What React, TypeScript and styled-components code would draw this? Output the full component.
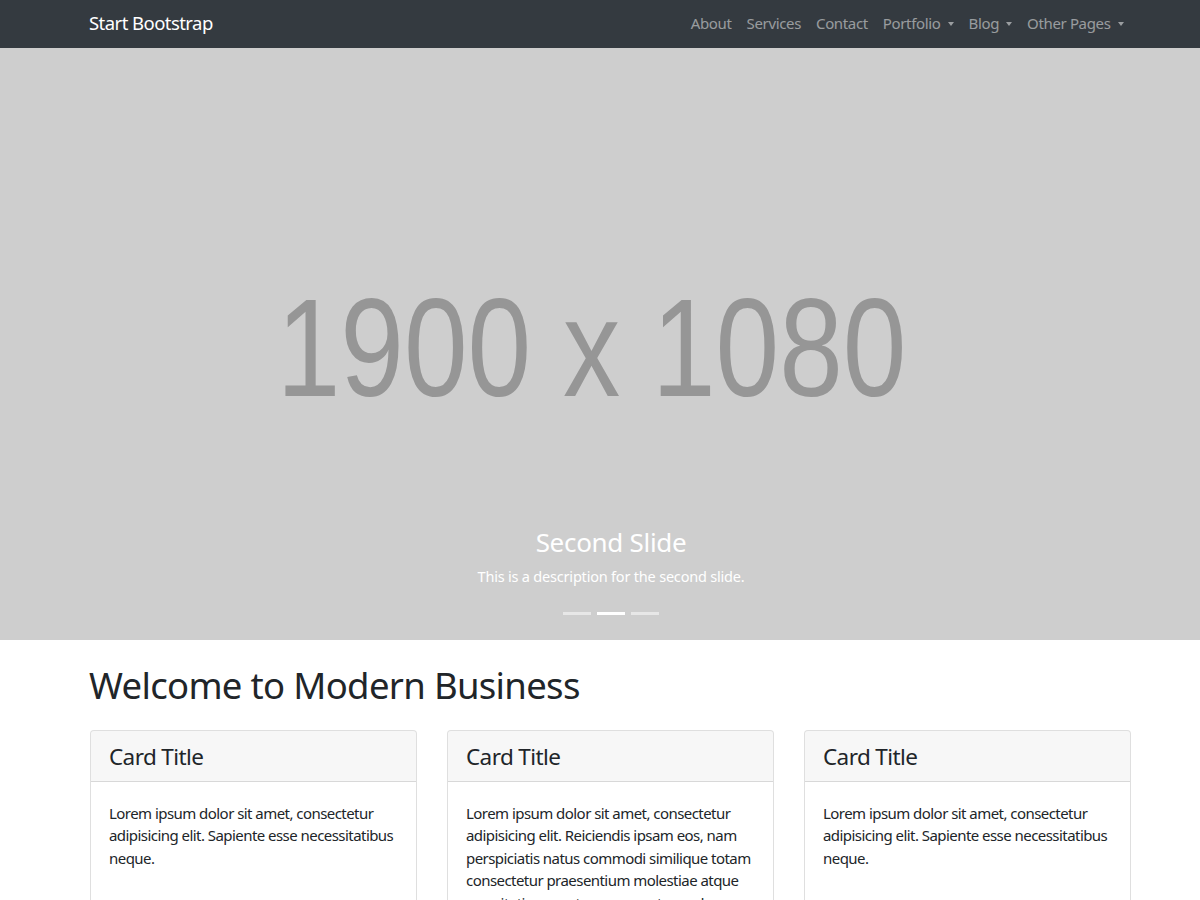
import React from "react";
import styled, { createGlobalStyle } from "styled-components";

const Global = createGlobalStyle`
  html, body { margin: 0; padding: 0; overflow: hidden; }
  body {
    font-family: "Noto Sans", "Open Sans", sans-serif;
    font-size: 15px;
    line-height: 22.5px;
    color: #212529;
    background: #fff;
  }
  * { box-sizing: border-box; }
`;

const Navbar = styled.nav`
  height: 48px;
  background: #343a40;
  display: flex;
  align-items: center;
  padding: 0 69px 1px 89px;
`;

const Brand = styled.a`
  color: #fff;
  font-size: 18.5px;
  text-decoration: none;
  margin-right: auto;
  letter-spacing: -0.55px;
`;

const NavList = styled.ul`
  list-style: none;
  margin: 0;
  padding: 0;
  display: flex;
  align-items: center;
`;

const NavItem = styled.li`
  padding: 0 7.5px;
  color: rgba(255, 255, 255, 0.5);
  font-size: 15px;
  letter-spacing: -0.35px;
  display: flex;
  align-items: center;
`;

const Caret = styled.span`
  display: inline-block;
  margin-left: 7px;
  width: 0;
  height: 0;
  border-top: 4.5px solid rgba(255, 255, 255, 0.5);
  border-left: 3.5px solid transparent;
  border-right: 3.5px solid transparent;
`;

const Carousel = styled.section`
  position: relative;
  height: 592px;
  background: #cecece;
  display: flex;
  align-items: center;
  justify-content: center;
  padding-right: 17px;
  overflow: hidden;
`;

const Placeholder = styled.span`
  font-family: "Liberation Sans", Arial, sans-serif;
  font-size: 139px;
  color: #969696;
  line-height: 1;
  transform: scaleX(0.823);
  white-space: nowrap;
  margin-top: 6px;
`;

const Caption = styled.div`
  position: absolute;
  left: 0;
  right: 0;
  bottom: 53px;
  padding-left: 22px;
  display: flex;
  flex-direction: column;
  align-items: center;
  color: #fff;
`;

const CaptionTitle = styled.h3`
  margin: 0 0 7px;
  font-size: 26px;
  line-height: 32px;
  font-weight: 400;
  letter-spacing: -0.3px;
`;

const CaptionText = styled.p`
  margin: 0;
  font-size: 14.5px;
  letter-spacing: -0.2px;
`;

const Indicators = styled.div`
  position: absolute;
  left: 0;
  right: 0;
  top: 564px;
  padding-left: 22px;
  display: flex;
  justify-content: center;
  gap: 6px;
`;

const Indicator = styled.span<{ $active?: boolean }>`
  width: 28px;
  height: 3px;
  background: #fff;
  opacity: ${(p) => (p.$active ? 1 : 0.5)};
`;

const Container = styled.main`
  width: 1041px;
  margin-left: 90px;
`;

const Heading = styled.h1`
  margin: 22.5px 0 22.5px -1px;
  font-size: 36.5px;
  line-height: 45px;
  font-weight: 400;
  letter-spacing: -0.68px;
`;

const CardRow = styled.div`
  display: grid;
  grid-template-columns: repeat(3, 327px);
  gap: 30px;
`;

const Card = styled.article`
  border: 1px solid rgba(0, 0, 0, 0.125);
  border-radius: 4px;
  background: #fff;
  overflow: hidden;
`;

const CardHeader = styled.header`
  background: rgba(0, 0, 0, 0.03);
  border-bottom: 1px solid rgba(0, 0, 0, 0.125);
  padding: 11.5px 18px 11px;
`;

const CardTitle = styled.h4`
  margin: 0;
  font-size: 22.5px;
  line-height: 27px;
  font-weight: 400;
  letter-spacing: -0.6px;
`;

const CardBody = styled.div`
  padding: 20px 17px 18px 18px;
  min-height: 190px;
`;

const CardText = styled.p`
  margin: 0;
  font-size: 15px;
  line-height: 22.5px;
  letter-spacing: -0.55px;
`;

const cards = [
  "Lorem ipsum dolor sit amet, consectetur adipisicing elit. Sapiente esse necessitatibus neque.",
  "Lorem ipsum dolor sit amet, consectetur adipisicing elit. Reiciendis ipsam eos, nam perspiciatis natus commodi similique totam consectetur praesentium molestiae atque exercitationem ut consequuntur, sed eveniet, magni nostrum sint fuga.",
  "Lorem ipsum dolor sit amet, consectetur adipisicing elit. Sapiente esse necessitatibus neque.",
];

export default function App() {
  return (
    <>
      <Global />
      <Navbar>
        <Brand href="#">Start Bootstrap</Brand>
        <NavList>
          <NavItem>About</NavItem>
          <NavItem>Services</NavItem>
          <NavItem>Contact</NavItem>
          <NavItem>
            Portfolio
            <Caret />
          </NavItem>
          <NavItem>
            Blog
            <Caret />
          </NavItem>
          <NavItem>
            Other Pages
            <Caret />
          </NavItem>
        </NavList>
      </Navbar>
      <Carousel>
        <Placeholder>1900 x 1080</Placeholder>
        <Caption>
          <CaptionTitle>Second Slide</CaptionTitle>
          <CaptionText>This is a description for the second slide.</CaptionText>
        </Caption>
        <Indicators>
          <Indicator />
          <Indicator $active />
          <Indicator />
        </Indicators>
      </Carousel>
      <Container>
        <Heading>Welcome to Modern Business</Heading>
        <CardRow>
          {cards.map((t, i) => (
            <Card key={i}>
              <CardHeader>
                <CardTitle>Card Title</CardTitle>
              </CardHeader>
              <CardBody>
                <CardText>{t}</CardText>
              </CardBody>
            </Card>
          ))}
        </CardRow>
      </Container>
    </>
  );
}
